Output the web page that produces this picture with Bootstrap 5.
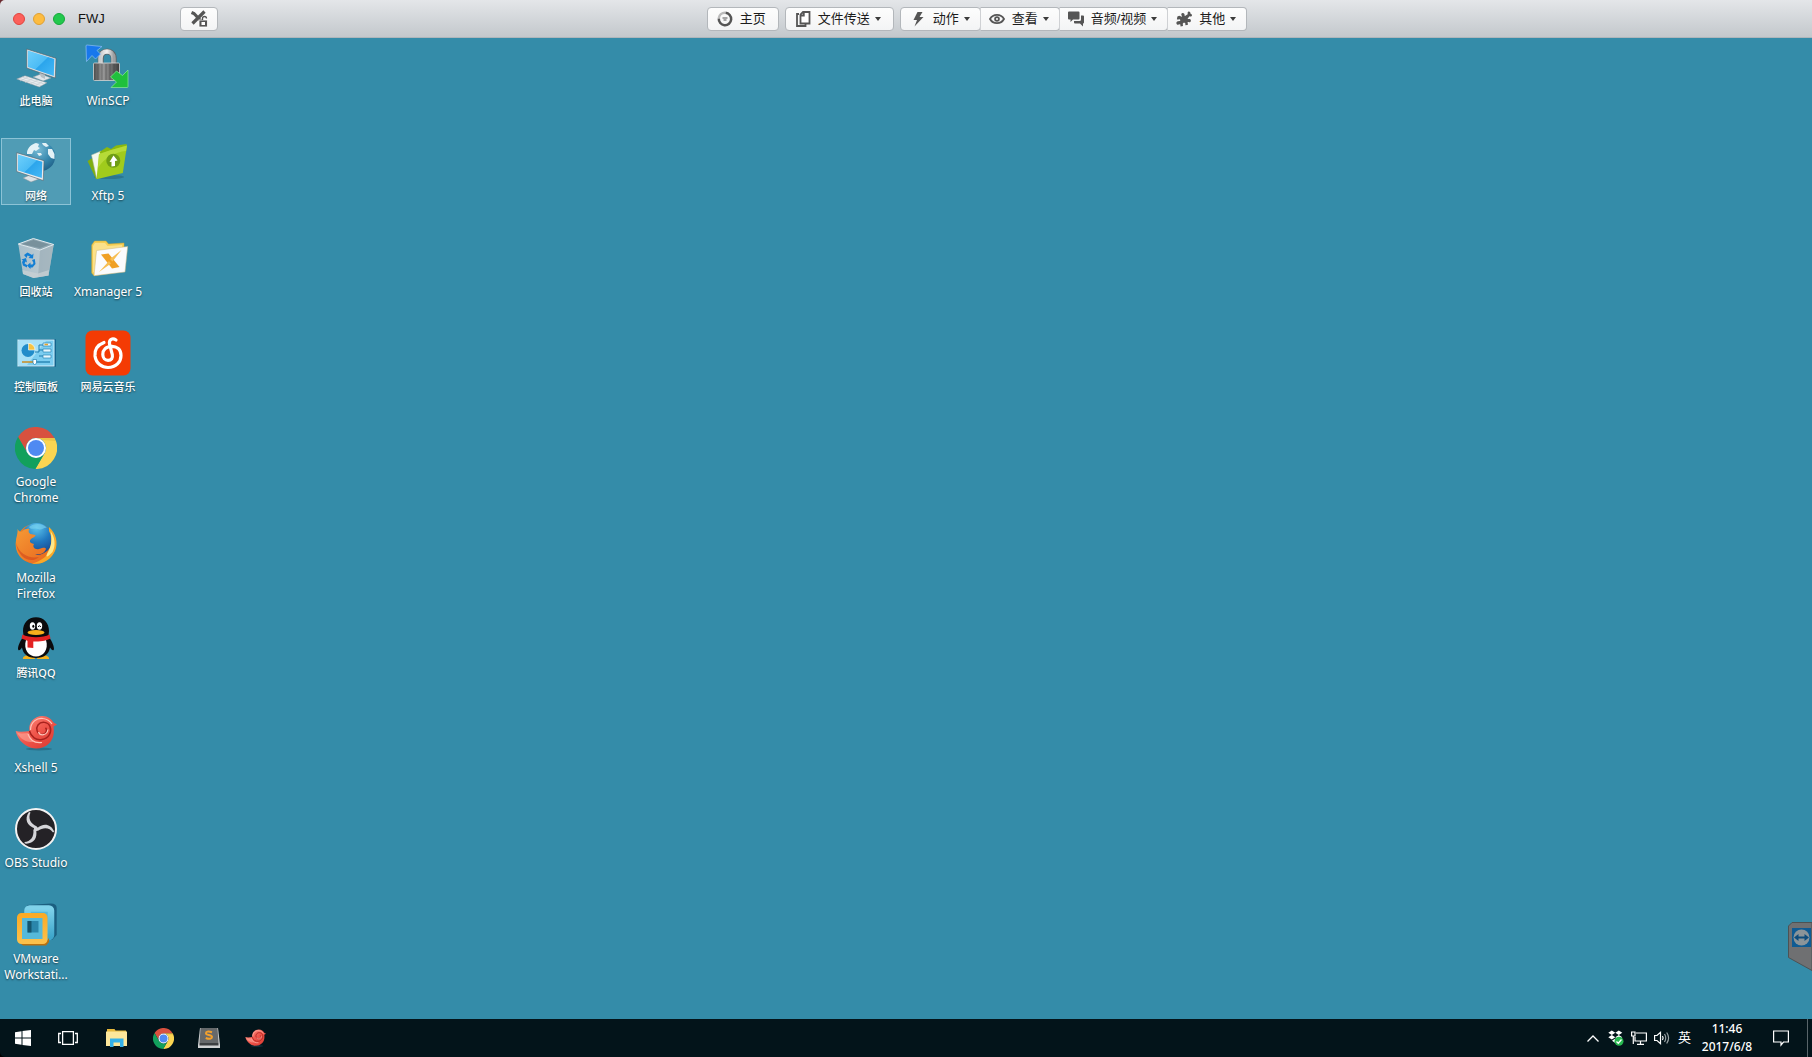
<!DOCTYPE html>
<html lang="zh-CN">
<head>
    <meta charset="UTF-8">
    <meta name="viewport" content="width=device-width, initial-scale=1.0">
    <title>FWJ</title>
    <!-- Bootstrap CSS CDN -->
    <link href="https://cdn.jsdelivr.net/npm/bootstrap@5.3.0/dist/css/bootstrap.min.css" rel="stylesheet">

    <style>
        html {
            background: #03141a;
        }
        body {
            background: #348ca9;
            font-family: "Noto Sans", "Noto Sans CJK SC", sans-serif;
            font-size: 12px;
        }
        svg {
            display: block;
            overflow: visible;
        }

        /* window title bar */
        .title-bar {
            height: 38px;
            background: linear-gradient(#e4e6e9, #c3c8cc);
            border-bottom: 1px solid #aeb6bb;
            border-top-left-radius: 5px;
            color: #111;
            font-family: "Liberation Sans", "Noto Sans CJK SC", sans-serif;
            font-size: 13px;
        }
        .title-wrap {
            background: #6b2a30;
        }
        .title-left {
            flex: 0 0 39%;
            padding-left: 13px;
        }
        .window-dots {
            gap: 8px;
            margin-right: 13px;
        }
        .window-dot {
            width: 12px;
            height: 12px;
            padding: 0;
            border: 1px solid #e0443e;
            border-radius: 50%;
            background: #fc605b;
        }
        .window-dot.dot-min {
            border-color: #dea034;
            background: #fdbc40;
        }
        .window-dot.dot-max {
            border-color: #14a83a;
            background: #22c84d;
        }
        .window-name {
            width: 102px;
        }
        .tool-groups {
            gap: 6px;
        }
        .tool-btn {
            --bs-btn-border-color: #b3b7bb;
            --bs-btn-hover-border-color: #b3b7bb;
            --bs-btn-color: #1c1c1c;
            --bs-btn-border-radius: 4px;
            display: flex;
            align-items: center;
            height: 24px;
            padding: 0 12px 0 9px;
            background: linear-gradient(#fdfdfd, #f3f4f5);
            font-family: inherit;
            font-size: 13px;
            line-height: 20px;
            white-space: nowrap;
        }
        .tool-btn svg {
            width: 16px;
            height: 16px;
            margin-right: 7px;
            color: #555;
        }
        .tool-btn.tool-lock {
            padding: 0 10px;
        }
        .tool-btn.tool-lock svg {
            margin-right: 0;
        }
        .btn-group .tool-btn {
            padding: 0 10px 0 9px;
        }
        .btn-group .tool-btn + .tool-btn {
            padding-left: 8px;
            border-left-color: #cfd1d4;
        }
        .tool-btn.dropdown-toggle::after {
            margin-left: 5px;
            border-top: 4px solid #3c3c3c;
            border-right: 3px solid transparent;
            border-left: 3px solid transparent;
        }

        /* desktop */
        .desktop {
            padding: 5px 0 23px;
        }
        .shortcut-grid {
            display: grid;
            grid-template-rows: repeat(10, 1fr);
            grid-auto-flow: column;
            grid-auto-columns: 72px;
            width: 144px;
        }
        .shortcut {
            height: 67px;
            margin: 0 1px;
            padding-top: 2px;
            border: 1px solid transparent;
            color: #fff;
            font-size: 12px;
            line-height: 16px;
            text-align: center;
            text-decoration: none;
            text-shadow: 0 1px 2px rgba(0, 0, 0, .6);
            white-space: nowrap;
        }
        .shortcut svg {
            width: 42px;
            height: 42px;
            margin: 0 auto 5px;
        }
        .shortcut span {
            display: block;
        }
        .shortcut .label-cn {
            font-size: 11px;
            font-weight: 500;
        }
        .shortcut.active {
            border-color: #8cc3d6;
            background: rgba(255, 255, 255, .14);
        }
        .shortcut:hover {
            background: rgba(255, 255, 255, .14);
        }
        .side-tab {
            position: absolute;
            right: 0;
            bottom: 48px;
            width: 24px;
            height: 49px;
            padding: 0;
            border: 0;
            background: none;
        }

        /* taskbar */
        .task-wrap {
            background: #000;
        }
        .taskbar {
            height: 38px;
            border-bottom-left-radius: 5px;
            background: #03141a;
            color: #fff;
        }
        .task-btn {
            display: flex;
            align-items: center;
            justify-content: center;
            width: 46px;
            height: 38px;
            padding: 0;
            border: 0;
            background: none;
            color: #fff;
        }
        .task-btn:hover {
            background: rgba(255, 255, 255, .1);
        }
        .shell-btn {
            width: 45px;
        }
        .tray-btn {
            width: 23px;
            font-size: 13px;
        }
        .clock-btn {
            width: 62px;
            font-weight: 500;
            line-height: 18px;
        }
        .show-desktop {
            width: 5px;
            margin-left: 3px;
            border-left: 1px solid #59656a;
        }
    </style>
</head>
<body class="d-flex flex-column min-vh-100">

    <!-- shared icons -->
    <svg width="0" height="0" class="position-absolute" aria-hidden="true">
        <defs>
            <linearGradient id="screen" x1="0" y1="0" x2="1" y2="1">
                <stop offset="0" stop-color="#6fd0fb"/>
                <stop offset=".5" stop-color="#4cbcf5"/>
                <stop offset=".52" stop-color="#2ba5ec"/>
                <stop offset="1" stop-color="#45b9f6"/>
            </linearGradient>
            <linearGradient id="metal">
                <stop offset="0" stop-color="#4a4a4a"/>
                <stop offset=".35" stop-color="#9a9a9a"/>
                <stop offset=".7" stop-color="#6b6b6b"/>
                <stop offset="1" stop-color="#3c3c3c"/>
            </linearGradient>
            <linearGradient id="shackle">
                <stop offset="0" stop-color="#c9cbcc"/>
                <stop offset=".5" stop-color="#f2f2f2"/>
                <stop offset="1" stop-color="#9da0a2"/>
            </linearGradient>
            <linearGradient id="shell" x1="0" y1="0" x2="1" y2="1">
                <stop offset="0" stop-color="#ff9a8c"/>
                <stop offset=".5" stop-color="#f0564c"/>
                <stop offset="1" stop-color="#d8352c"/>
            </linearGradient>
            <linearGradient id="fox" x1="0" y1="0" x2="1" y2="1">
                <stop offset="0" stop-color="#f08a24"/>
                <stop offset=".6" stop-color="#e4561b"/>
                <stop offset="1" stop-color="#f9a51c"/>
            </linearGradient>
            <linearGradient id="fox-head" x1="0" y1="0" x2="1" y2="1">
                <stop offset="0" stop-color="#f59a35"/>
                <stop offset="1" stop-color="#e8641d"/>
            </linearGradient>
            <radialGradient id="globe" cx=".5" cy=".15" r=".9">
                <stop offset="0" stop-color="#5cc4ec"/>
                <stop offset=".5" stop-color="#2078bf"/>
                <stop offset="1" stop-color="#173f85"/>
            </radialGradient>
            <radialGradient id="earth" cx=".4" cy=".25" r=".8">
                <stop offset="0" stop-color="#79bdd6"/>
                <stop offset=".6" stop-color="#3587ad"/>
                <stop offset="1" stop-color="#1f5f86"/>
            </radialGradient>
            <linearGradient id="glass" x1="0" y1="0" x2="1" y2="0">
                <stop offset="0" stop-color="#a9bfca"/>
                <stop offset="1" stop-color="#c3ced4"/>
            </linearGradient>
            <linearGradient id="vm-blue" x1="0" y1="0" x2="0" y2="1">
                <stop offset="0" stop-color="#7fd2ea"/>
                <stop offset="1" stop-color="#3ea6cb"/>
            </linearGradient>
            <linearGradient id="vm-gold" x1="0" y1="0" x2="0" y2="1">
                <stop offset="0" stop-color="#fbab26"/>
                <stop offset="1" stop-color="#fcc04a"/>
            </linearGradient>
        </defs>
        <symbol id="icon-chrome" viewBox="0 0 42 42">
            <path fill="#d8513f" d="M3.1 10A21 21 0 0 1 39.5 11H21A10 10 0 0 0 12.3 26Z"/>
            <path fill="#fbd552" d="M39.5 11A21 21 0 0 1 20.4 42L29.7 26A10 10 0 0 0 21 11Z"/>
            <path fill="#12a05d" d="M20.4 42A21 21 0 0 1 3.1 10L12.3 26A10 10 0 0 0 29.7 26Z"/>
            <path fill="#e2b93f" opacity=".6" d="M21 11H39.5L40.5 14L27 13Z"/>
            <circle cx="21" cy="21" r="10" fill="#fff"/>
            <circle cx="21" cy="21" r="8" fill="#4f8af2"/>
        </symbol>
        <symbol id="icon-xshell" viewBox="0 0 42 42">
            <ellipse cx="24" cy="36" rx="13" ry="1.5" fill="#1d566b" opacity=".5"/>
            <path fill="url(#shell)" d="M.7 18C5 19.500 10 18.500 14.500 18C13 10 19 3 27.500 3C33 3 36.500 6 38.500 9.500L42 11.500L38.500 13.500C39.500 20 38.500 26 34 30.500C28 36.500 18 37 11 32.500C5.500 29 2 24 .7 18Z"/>
            <path fill="none" stroke="#a8211d" stroke-width="1.500" d="M14.500 18C16 24 21 27.500 27 26.500C34 25.500 37 19 35 13.500C33 8.500 26 8 23 12C20.500 15.500 22 21 26.500 21.500C30.500 22 33 17.500 30.500 14.800"/>
            <path fill="none" stroke="#ffc4b8" stroke-width="1.200" d="M15.500 17C15.500 9 22 4.500 28 5.500C32 6 35 8 37 11M23.500 19C25 23.500 32 22.500 33 16.500M13 21C15 27 20 30.500 27 29.500"/>
            <path fill="#ffb4a5" opacity=".5" d="M2 19.500C6 21 9 20.500 13 20C14 24 16 27 19 29C11 29.500 5 26 2 19.500Z"/>
        </symbol>
    </svg>

    <header class="title-wrap">
        <div class="title-bar d-flex align-items-center">
            <div class="title-left d-flex align-items-center">
                <div class="window-dots d-flex">
                    <button type="button" class="window-dot" aria-label="关闭"></button>
                    <button type="button" class="window-dot dot-min" aria-label="最小化"></button>
                    <button type="button" class="window-dot dot-max" aria-label="最大化"></button>
                </div>
                <div class="window-name">FWJ</div>
                <button type="button" class="btn tool-btn tool-lock" aria-label="锁定">
                    <svg viewBox="0 0 16 16">
                        <path fill="none" stroke="currentColor" stroke-width="3.200" d="M.500 1.500L3 2.500L10.500 10.500M13.500 .500L1.500 12.500"/>
                        <rect x="8" y="9" width="8.500" height="7" fill="#555" stroke="#fff" stroke-width=".8"/>
                        <rect x="10.500" y="11" width="3.500" height="3" fill="#fff"/>
                        <path fill="none" stroke="#555" stroke-width="1.300" d="M11.500 9V7.500A2 2 0 0 1 15.500 7.500"/>
                    </svg>
                </button>
            </div>
            <div class="tool-groups d-flex">
                <button type="button" class="btn tool-btn">
                    <svg viewBox="0 0 16 16" fill="none" stroke="currentColor">
                        <path stroke="#bbb" stroke-width="2.500" d="M1.800 7A6.200 6.200 0 0 1 8 1.800"/>
                        <path stroke-width="2.500" d="M8.500 1.800A6.200 6.200 0 1 1 1.800 7.500"/>
                        <path d="M5.500 7H10.500M6.500 9H9.500"/>
                    </svg>
                    主页
                </button>
                <button type="button" class="btn tool-btn dropdown-toggle">
                    <svg viewBox="0 0 16 16" fill="none" stroke="currentColor" stroke-width="1.800">
                        <path d="M4 3H2V15H10.500V13"/>
                        <path fill="#fff" d="M8 1H14.500V12.500H5.500V3.500Z"/>
                        <path d="M8.800 1V4.500H5.500"/>
                    </svg>
                    文件传送
                </button>
                <div class="btn-group">
                    <button type="button" class="btn tool-btn dropdown-toggle">
                        <svg viewBox="0 0 16 16"><path fill="currentColor" d="M7.500 1H12.500L9.500 6H13.500L4.500 15.500L7 9H3.500Z"/></svg>
                        动作
                    </button>
                    <button type="button" class="btn tool-btn dropdown-toggle">
                        <svg viewBox="0 0 16 16">
                            <path fill="none" stroke="currentColor" stroke-width="1.800" d="M1 8C4 2.500 12 2.500 15 8C12 13.500 4 13.500 1 8Z"/>
                            <circle cx="8" cy="8" r="2.800" fill="currentColor"/>
                            <circle cx="8" cy="8" r="1" fill="#fff"/>
                        </svg>
                        查看
                    </button>
                    <button type="button" class="btn tool-btn dropdown-toggle">
                        <svg viewBox="0 0 16 16" fill="currentColor">
                            <path d="M1 .500H10.500Q11.500 .500 11.500 1.500V7.500Q11.500 8.500 10.500 8.500H5L2.500 11V8.500H1Q0 8.500 0 7.500V1.500Q0 .500 1 .500Z"/>
                            <path d="M13 4.500H15Q16 4.500 16 5.500V11.500Q16 12.500 15 12.500V15.500L12 12.500H7Q6 12.500 6 11.500V10H11.500Q13 10 13 8.500Z"/>
                        </svg>
                        音频/视频
                    </button>
                    <button type="button" class="btn tool-btn dropdown-toggle">
                        <!-- puzzle piece -->
                        <svg viewBox="0 0 16 16">
                            <path fill="currentColor" d="M3.200 4.800L6 5.800C6.600 5.300 5 4.300 5.300 3C5.700 1.700 7.700 1.700 8.400 2.900C8.800 3.800 8.300 4.700 9 4.900L11.700 3.200C11.900 2.500 11.200 1.600 12.200 .8C13.200 .2 14.600 1 14.300 2.300C14.700 3.100 15.900 2.900 16 4.300C16 5.600 14.300 5.800 13.400 5.300L11.600 7.700C12 8.500 13.200 7.500 14.300 8.200C15.300 9 15.100 10.700 13.900 11.200C12.900 11.500 12 10.700 11.600 11.200L12 13.700L9.700 14.300C8.800 14 10 12.600 9 11.900C8 11.200 6.500 12 6.800 13.200L7 14.900L4.600 15.500L4.200 13.300C3.500 12.700 2.300 14.300 1 13.400C-.2 12.300 .4 10.700 1.800 10.300L4 10C4.600 9.300 4.300 8.300 3.500 8.200C2.500 8 1.800 9 .9 8.300L1.400 5.500Z"/>
                        </svg>
                        其他
                    </button>
                </div>
            </div>
        </div>
    </header>

    <main class="desktop d-flex flex-grow-1 position-relative">
        <div class="shortcut-grid">
            <a href="#" class="shortcut">
                <svg viewBox="0 0 42 42">
                    <path fill="#dfe6ea" stroke="#8d979d" stroke-width=".5" d="M18 31L26 28L36 32L28 35Z"/>
                    <path fill="#b5bec4" d="M24 26H30V33L26 31Z"/>
                    <path fill="#dfe3e6" stroke="#4d5a61" stroke-width=".6" d="M11.700 3L41 12.300L40.300 32L11.700 22Z"/>
                    <path fill="url(#screen)" d="M12.900 4.600L39.300 13L38.800 30L12.900 21Z"/>
                    <path fill="#e9edf0" stroke="#8f999f" stroke-width=".5" d="M1.700 33L10 29.700L32 36.700L24.300 41Z"/>
                    <path stroke="#c2cacf" stroke-width=".6" d="M4 32.300L26 39.500M7 31L29 38M5 35L13 31M10 36.500L18 32.500M15 38L23 34M20 39.500L28 35.500"/>
                </svg>
                <span class="label-cn">此电脑</span>
            </a>
            <a href="#" class="shortcut active">
                <svg viewBox="0 0 42 42">
                    <circle cx="25.700" cy="15.500" r="14.500" fill="url(#earth)"/>
                    <path fill="#e3f2f6" d="M12 11C13 6 17 3 21 2L24 3L23 6L25 7L21 10L19 9L17 13L12 13ZM27 2L31 2L34 5L31 6L28 4ZM33 8L37 8L39.500 13L39.500 18L36 17L33 13ZM22 12L26 12L27 14L24 15Z"/>
                    <path fill="#dce3e7" stroke="#879198" stroke-width=".5" d="M8 37L15 34L24 38L16 41Z"/>
                    <path fill="#e8ebed" stroke="#55616a" stroke-width=".6" d="M1.700 11.700L29 19.700L28.300 39.500L1.700 30.500Z"/>
                    <path fill="url(#screen)" d="M3 13.500L27.300 20.700L26.800 37L3 29.500Z"/>
                </svg>
                <span class="label-cn">网络</span>
            </a>
            <a href="#" class="shortcut">
                <svg viewBox="0 0 42 42">
                    <path fill="url(#glass)" d="M3.300 7L25 13L38.700 7.500L33.500 38.500L18.500 41L8 37Z"/>
                    <path fill="#94a8b2" opacity=".6" d="M25 13L38.700 7.500L33.500 38.500L23 40Z"/>
                    <path fill="#8ea6b1" stroke="#e2ebef" stroke-width="1" d="M3.300 7L18.300 1.500L38.700 7.500L25 13Z"/>
                    <path fill="#78919c" d="M7 7L18.500 3L34 7.500L25 11Z"/>
                    <path fill="#c7cfd3" d="M7.500 33L23 36.500L34 33L33.500 38.500L18.500 41L8 37Z" opacity=".8"/>
                    <g fill="#137fd4">
                        <path d="M9 18L12.500 15.500L17 18L18.500 16.500L18 21.500L13.500 21L15 19.500L12.500 18.500L11.500 21Z"/>
                        <path d="M17 23L19.800 22L20.500 27L17.500 30.500H15.500V32L12 28.500L15.500 25.500V27.500H17.500L18.500 26Z"/>
                        <path d="M6.500 22.500L11 21L12 25.500L10.500 24.500L9.500 26.500L12 28V30.500L8 28.500L7 25L8 23.500Z"/>
                    </g>
                </svg>
                <span class="label-cn">回收站</span>
            </a>
            <a href="#" class="shortcut">
                <svg viewBox="0 0 42 42">
                    <rect x="3" y="7" width="38" height="28" rx="1" fill="#14658e"/>
                    <rect x="3" y="8" width="36" height="26" fill="#7ccdf0" stroke="#d4f1fb" stroke-width="1"/>
                    <path fill="#a7e0f7" d="M4 9H31L12 33H4Z"/>
                    <circle cx="13" cy="18.500" r="6.500" fill="#218cca"/>
                    <path fill="#f6c343" stroke="#fff" stroke-width=".6" d="M13.500 18V11.300A6.500 6.500 0 0 1 20 18Z"/>
                    <path fill="none" stroke="#1e7cae" stroke-width="1" d="M20 20H24V13H28M24 18H28M24 24H28"/>
                    <path fill="#e7f8ff" stroke="#2b87b6" stroke-width=".7" d="M28 11H36V14H28ZM28 17H36V20H28ZM28 23H36V26H28Z"/>
                    <path stroke="#e6a32a" stroke-width="1.500" d="M29.500 12.500H33"/>
                    <path stroke="#c98d22" stroke-width="1.500" d="M7 30H18"/>
                    <path stroke="#2b87b6" stroke-width="1.500" d="M20 30H35"/>
                    <path fill="#fff" stroke="#1e7cae" stroke-width=".7" d="M18 27.500H21.500V31L19.700 33L18 31Z"/>
                </svg>
                <span class="label-cn">控制面板</span>
            </a>
            <a href="#" class="shortcut">
                <svg><use href="#icon-chrome"/></svg>
                <span>Google</span><span>Chrome</span>
            </a>
            <a href="#" class="shortcut">
                <svg viewBox="0 0 42 42">
                    <circle cx="20.800" cy="20.800" r="20" fill="url(#fox)"/>
                    <circle cx="21.500" cy="16" r="16" fill="url(#globe)"/>
                    <path fill="#7bd3f0" opacity=".6" d="M14 4C19 0 28 0 32 5C29 4 27 8 23 6C19 4 17 8 14 4Z"/>
                    <path fill="url(#fox-head)" d="M2.500 6C3.500 8 5 9 7 8.500C9 6 12 5.500 14.500 6C13 8 13.500 10 15.500 11L20.500 12C20.500 14.500 15.500 15 15 17.500C14.500 20 17 20.500 19 21C17 24 20 27 24 26C28 25 30 24 31 26C29 31 24 32 20 31C28 35 36 31 36.500 22C40 30 33 40 21 40.500C8 40.500 0 31 .8 20C1 14 3 11 2.500 6Z"/>
                    <path fill="#f9a928" d="M34 4C41 10 43.500 20 40 28C36 37 27 42 17 40.500C27 38 34 32 35.500 25C36.500 18 37 13 34 8Z"/>
                    <path fill="#fde98a" d="M35.500 8C40 14 41 23 37.500 29C31 36 30 34 33.500 28C37 21 37 16 35.500 8Z"/>
                    <path fill="#d2461a" opacity=".6" d="M1 20C4 31 14 36 24 34C17 41 3 36 1 20Z"/>
                </svg>
                <span>Mozilla</span><span>Firefox</span>
            </a>
            <a href="#" class="shortcut">
                <svg viewBox="0 0 42 42">
                    <path fill="#f6b21b" d="M8 41C7 38 13 36 19 37.500L20 41ZM34 41C35 38 29 36 23 37.500L22 41Z"/>
                    <path fill="#0b0b0d" d="M21 -.800C29 -.800 34 5 34 13L33.500 18C36 22 39 27 39 31C38.500 33.500 36.500 32 35 29.500C34 36 29 40 21 40C13 40 8 36 7 29.500C5.500 32 3.500 33.500 3 31C3 27 6 22 8.500 18L8 13C8 5 13 -.800 21 -.800Z"/>
                    <path fill="#fff" d="M11 22C16 23 26 23 31 22C34 32 28 38.500 21 38.500C14 38.500 8 32 11 22Z"/>
                    <ellipse cx="17.500" cy="8" rx="2.700" ry="3.700" fill="#fff"/>
                    <ellipse cx="24.500" cy="8" rx="2.700" ry="3.700" fill="#fff"/>
                    <ellipse cx="18.300" cy="8.300" rx="1" ry="1.500"/>
                    <path fill="none" stroke="#111" d="M23.300 9C23.500 7.300 25.300 7.300 25.700 9"/>
                    <ellipse cx="21" cy="14.500" rx="8.500" ry="2.600" fill="#f9b01c"/>
                    <path fill="#e32222" d="M7.500 16.500C14 20 28 20 34.500 16.500L35.500 20.500C31 23 25 23.500 18.300 23.500V30L12.500 29.500V22.700L6.500 20.500Z"/>
                </svg>
                <span class="label-cn">腾讯QQ</span>
            </a>
            <a href="#" class="shortcut">
                <svg><use href="#icon-xshell"/></svg>
                <span>Xshell 5</span>
            </a>
            <a href="#" class="shortcut">
                <svg viewBox="0 0 42 42">
                    <circle cx="21" cy="21" r="20" fill="#242226" stroke="#f3f3f3" stroke-width="2"/>
                    <g id="obs-arm">
                        <path fill="#d5d5d9" d="M20 20.500C12 18 9 11 14 4L15.500 4.500C13 10 15 15.500 22 18.500Z"/>
                    </g>
                    <use href="#obs-arm" transform="rotate(120 21 21)"/>
                    <use href="#obs-arm" transform="rotate(240 21 21)"/>
                    <circle cx="21" cy="21" r="2.200" fill="#d5d5d9"/>
                </svg>
                <span>OBS Studio</span>
            </a>
            <a href="#" class="shortcut">
                <svg viewBox="0 0 42 42">
                    <!-- dark right side of the blue frame -->
                    <path fill="#1b5f80" d="M12 1L36 -.500Q41.700 -.500 41.700 4V31L37 36H31Z"/>
                    <rect x="12.500" y="4.500" width="23.500" height="28.500" rx="2" fill="#56b9d9" stroke="url(#vm-blue)" stroke-width="6.500"/>
                    <path fill="#b8700f" d="M31 38L34 34V38L31 41.500H8L5 39Z"/>
                    <rect x="4.500" y="11.500" width="25.500" height="26" rx="2" fill="#56b9d9" stroke="url(#vm-gold)" stroke-width="5"/>
                    <path fill="#2a86ab" d="M12.500 17H23.500V28.500H12.500Z"/>
                    <path fill="#14566f" d="M12.500 17H16.500V28.500H12.500Z"/>
                </svg>
                <span>VMware</span><span>Workstati...</span>
            </a>
            <a href="#" class="shortcut">
                <svg viewBox="0 0 42 42">
                    <path fill="none" stroke="#5f6466" stroke-width="6" d="M13.700 20V12.500C13.700 3 26.700 3 26.700 12.500V20"/>
                    <path fill="none" stroke="url(#shackle)" stroke-width="4.500" d="M13.500 20V12.500C13.500 3 26.500 3 26.500 12.500V20"/>
                    <rect x="6.500" y="17" width="26" height="17.500" rx="1" fill="url(#metal)" stroke="#d3d3d3" stroke-width=".8"/>
                    <path stroke="#3d3d3d" stroke-width="1" opacity=".5" d="M11 18V34M15 18V34M19 18V34M23 18V34M27 18V34"/>
                    <path fill="#1878ec" stroke="#8dc0f5" stroke-width=".7" d="M-1 0Q-1 -1 0 -1L15 .5L10 4.500L13.500 8L8.500 13L5 9.500L-.500 15.500Z"/>
                    <path fill="#1fc03c" stroke="#8eea96" stroke-width=".7" d="M41 24V40.500Q41 41.500 40 41.500H24L29.500 36L23.500 31L29.500 25L35.500 29.500Z"/>
                </svg>
                <span>WinSCP</span>
            </a>
            <a href="#" class="shortcut">
                <svg viewBox="0 0 42 42">
                    <ellipse cx="22" cy="36" rx="15" ry="2" fill="#1d566b" opacity=".4"/>
                    <path fill="#7fae12" d="M.500 20L9 15L14 36L9 38Z"/>
                    <path fill="#f5f8ee" stroke="#aab996" stroke-width=".5" d="M4.500 14L14 10L16 33L9.500 37Z"/>
                    <path fill="#8ab80f" d="M12.500 11L20 6L24 8L29 4.500L39.700 3L39 12L16 18Z"/>
                    <path fill="#a0cb1c" d="M12 13L24 9L40 4.500L35.800 32L9.500 38.300Z"/>
                    <path fill="#c5e44b" opacity=".6" d="M12 13L24 9L40 4.500L39 10C28 11 17 17 11 27Z"/>
                    <circle cx="26.300" cy="19.700" r="7" fill="#6f9d14"/>
                    <path fill="#fff" d="M26.500 14.500L30.500 19.500L28 20V25L24.500 25.500V20.700L22.500 21Z"/>
                </svg>
                <span>Xftp 5</span>
            </a>
            <a href="#" class="shortcut">
                <svg viewBox="0 0 42 42">
                    <path fill="#f5cf55" stroke="#d2a42d" stroke-width=".5" d="M4.700 8L7.500 4H19L21.500 7L37 6V34L7 38.700L4.700 36Z"/>
                    <path fill="#fbe18a" d="M6 9L8 6H18L20.500 9L35 8V12L9 14L8 36L6 35Z"/>
                    <path fill="#fbfbfc" stroke="#ccb980" stroke-width=".5" d="M9.500 13.500L40.700 9.500L38 35L7 38.700Z"/>
                    <path fill="#f0a024" d="M14 17.500L21.500 16.500L32.500 30L25 31.500Z"/>
                    <path fill="#f7be52" d="M34.500 13L25.500 24.500L23 22ZM22 24L24 26.500L12 35Z"/>
                </svg>
                <span>Xmanager 5</span>
            </a>
            <a href="#" class="shortcut">
                <svg viewBox="0 0 42 42">
                    <rect x="-1.500" y="-1.500" width="45" height="45" rx="7" fill="#f43b04"/>
                    <path fill="none" stroke="#fff" stroke-width="3.200" stroke-linecap="round" d="M17 10.500C10.500 13 7.500 18 8 24C9 31.500 15 35.500 21 35.500C29 35.500 34 30 34 23.500C34 17 29.500 14.300 25 14.300C19 14.300 15.800 18 15.800 22.500C15.800 26 18 28.300 21 28.300C24.500 28.300 26 26 25.300 22.500L22.500 12C21.800 7.500 25.500 5.500 29 8"/>
                </svg>
                <span class="label-cn">网易云音乐</span>
            </a>
        </div>

        <button type="button" class="side-tab" aria-label="TeamViewer">
            <svg viewBox="0 0 24 49" width="24" height="49">
                <path fill="#6f7072" stroke="#4d5254" stroke-width="1" d="M24 .500H4L.500 4V35.500L24 48.500Z"/>
                <rect x="4" y="6" width="19" height="19" fill="#0f5b93"/>
                <circle cx="13.500" cy="15.500" r="8" fill="#8b9499"/>
                <path fill="#0f4c7c" d="M6 15.500L10.500 12V14.500H16.500V12L21 15.500L16.500 19V16.500H10.500V19Z"/>
            </svg>
        </button>
    </main>

    <footer class="task-wrap">
        <div class="taskbar d-flex">
            <button type="button" class="task-btn shell-btn" aria-label="开始">
                <svg width="16" height="16" viewBox="0 0 16 16"><path fill="#fff" d="M0 2.300L6.500 1.300V7.500H0ZM7.500 1.100L16 0V7.500H7.500ZM0 8.500H6.500V14.700L0 13.700ZM7.500 8.500H16V16L7.500 14.900Z"/></svg>
            </button>
            <button type="button" class="task-btn shell-btn" aria-label="任务视图">
                <svg width="20" height="14" viewBox="0 0 20 14" fill="none" stroke="#fff" stroke-width="1.300"><path d="M4.600 .700H15.400V13.300H4.600ZM3 2.500H.700V11.500H3M17 2.500H19.300V11.500H17"/></svg>
            </button>
            <button type="button" class="task-btn ms-1" aria-label="文件资源管理器">
                <svg width="22" height="18" viewBox="0 0 22 18">
                    <path fill="#e8b93c" d="M1 0H8.500L9.500 1.500H20V5H1Z"/>
                    <path fill="#fde79b" d="M0 2.500H21V17H0Z"/>
                    <path fill="#35b1e8" d="M4 9.500H17.500V18H14V13.500H7.500V18H4Z"/>
                </svg>
            </button>
            <button type="button" class="task-btn" aria-label="Google Chrome">
                <svg width="21" height="21"><use href="#icon-chrome"/></svg>
            </button>
            <button type="button" class="task-btn" aria-label="Sublime Text">
                <svg width="22" height="20" viewBox="0 0 22 20">
                    <path fill="#d0d2d3" d="M2 0H20L22 17V20H0V17Z"/>
                    <path fill="#66696b" d="M2.500 0H19.500L20.500 15H1.500Z"/>
                    <path fill="#3c3f41" d="M1.500 15H20.500V17.500H1.500Z"/>
                    <path fill="none" stroke="#f2a02c" stroke-width="2" d="M14 4.300C10 3 8 3.500 8 5.200C8 7.700 14 6.300 14 9C14 11 11 11.300 7.700 10"/>
                </svg>
            </button>
            <button type="button" class="task-btn" aria-label="Xshell 5">
                <svg width="21" height="21"><use href="#icon-xshell"/></svg>
            </button>

            <button type="button" class="task-btn tray-btn ms-auto" aria-label="显示隐藏的图标">
                <svg width="12" height="7" viewBox="0 0 12 7" fill="none" stroke="#fff" stroke-width="1.300"><path d="M.500 6.500L6 1L11.500 6.500"/></svg>
            </button>
            <button type="button" class="task-btn tray-btn" aria-label="Dropbox">
                <svg width="16" height="16" viewBox="0 0 16 16">
                    <path fill="#fff" d="M3.800 .500L7.300 2.700L3.800 5L.300 2.700ZM10.800 .500L14.300 2.700L10.800 5L7.300 2.700ZM3.800 5L7.300 7.300L3.800 9.500L.300 7.300ZM10.800 5L14.300 7.300L10.800 9.500L7.300 7.300ZM7.300 8.500L10.500 10.700L7.300 13L4 10.700Z"/>
                    <circle cx="11" cy="11.300" r="4.500" fill="#28b950"/>
                    <path fill="none" stroke="#fff" stroke-width="1.300" d="M8.500 11.500L10.300 13.200L13.500 9.500"/>
                </svg>
            </button>
            <button type="button" class="task-btn tray-btn" aria-label="网络">
                <svg width="16" height="14" viewBox="0 0 16 14" fill="none" stroke="#fff" stroke-width="1.200"><path d="M5 2H15.400V10H4V6M9.500 10V13M6 13.300H13M.600 1H4V5H.600ZM2.300 5V13"/></svg>
            </button>
            <button type="button" class="task-btn tray-btn" aria-label="音量">
                <svg width="16" height="14" viewBox="0 0 16 14" fill="none" stroke="#fff" stroke-width="1.200">
                    <path d="M.600 4.500H3L6.500 1.300V12.700L3 9.500H.600ZM8.500 5Q9.800 7 8.500 9"/>
                    <path stroke="#9aa3a6" d="M10.500 3Q13 7 10.500 11M12.700 1.500Q16.500 7 12.700 12.500"/>
                </svg>
            </button>
            <button type="button" class="task-btn tray-btn">英</button>
            <button type="button" class="task-btn clock-btn">11:46<br>2017/6/8</button>
            <button type="button" class="task-btn" aria-label="通知">
                <svg width="16" height="16" viewBox="0 0 16 16" fill="none" stroke="#fff" stroke-width="1.200"><path d="M.600 1H15.400V12H10.500L8 15L8 12H.600Z"/></svg>
            </button>
            <button type="button" class="task-btn show-desktop" aria-label="显示桌面"></button>
        </div>
    </footer>

    <script src="https://cdn.jsdelivr.net/npm/bootstrap@5.3.0/dist/js/bootstrap.bundle.min.js"></script>
</body>
</html>
